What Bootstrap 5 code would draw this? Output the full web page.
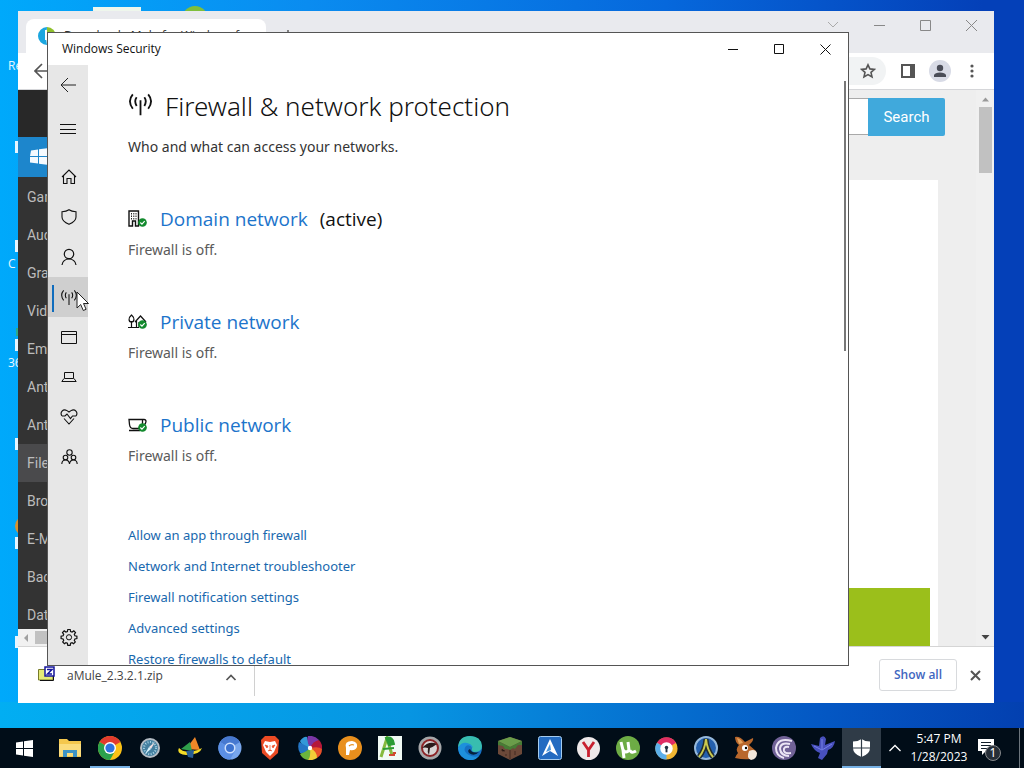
<!DOCTYPE html>
<html lang="en">
<head>
<meta charset="utf-8">
<meta name="viewport" content="width=device-width, initial-scale=1">
<title>Windows Security</title>
<link href="https://cdn.jsdelivr.net/npm/bootstrap@5.3.0/dist/css/bootstrap.min.css" rel="stylesheet">
<style>
  body { font-family: "Noto Sans", "Open Sans", sans-serif; font-size: 14px; line-height: 20px; color: #333; }
  svg { display: block; flex: none; }
  button { border: 0; background: none; padding: 0; }
  a { text-decoration: none; }
  .desktop { background: linear-gradient(90deg, #00a9fb 0, #0a8cf0 30%, #0668dc 65%, #0440b8 96%); }
  .ground { background: linear-gradient(90deg, #02aef2 0, #0795e2 40%, #0458c4 80%, #0340b0 100%); height: 26px; left: 0; right: 0; bottom: 40px; }
  /* desktop icons */
  .shortcut { left: 0; width: 24px; color: #e8f6ff; font: 12px/16px "Open Sans", sans-serif; overflow: hidden; white-space: nowrap; padding-left: 8px; }
  .shortcut i { display: block; width: 4px; height: 12px; margin-left: 7px; background: #e6f5ff; }
  .ic-top { top: 7px; left: 93px; width: 48px; height: 5px; background: #eef6ec; }
  .ic-top2 { top: 6px; left: 182px; width: 26px; height: 26px; border-radius: 50%; background: #7fbf3c; }
  .ic-side { top: 516px; left: 15px; width: 20px; height: 20px; border-radius: 50%; background: #d8922e; }
  .ic-side2 { top: 328px; left: 16px; width: 8px; height: 8px; background: #2fa98a; }
  /* browser */
  .browser { inset: 11px 30px 65px 18px; background: #fff; }
  .tabstrip { height: 42px; background: #e9eaee; padding-top: 8px; }
  .tab { width: 240px; margin-left: 8px; background: #fff; border-radius: 8px 8px 0 0; padding: 0 0 0 12px; font: 12px/34px "Open Sans", sans-serif; }
  .capbtn { width: 46px; height: 28px; margin-top: -8px; }
  .toolbar { height: 37px; border-bottom: 1px solid #d5d6d9; padding-right: 19px; }
  .toolbar .starwrap { width: 60px; height: 28px; border-radius: 0 14px 14px 0; background: #f1f3f4; margin-right: 15px; padding-right: 10px; }
  .avatar { width: 22px; height: 22px; border-radius: 50%; background: #d8dbe6; margin: 0 14px; }
  .catalog { width: 170px; background: #333; font: 14px/38px Roboto, sans-serif; }
  .catalog a { color: #bcbcbc; padding-left: 9px; height: 38px; }
  .catalog .brandrow { height: 47px; background: #282828; }
  .catalog .oswin { height: 40px; margin-bottom: 1px; background: #1d86cc; padding: 11px 0 0 12px; }
  .catalog .current { background: #4a4a4c; }
  .hscroll { height: 17px; background: #f1f1f1; }
  .hscroll b { height: 13px; background: #c1c1c1; margin-left: 3px; }
  .sitebody { background: #eee; }
  .searchrow { height: 90px; padding: 8px 31px 0 0; }
  .searchrow input { width: 300px; height: 37px; border: 1px solid #a9a9a9; border-right: 0; background: #fff; }
  .searchrow button { width: 77px; height: 38px; background: #40a9dc; color: #fff; border-radius: 0 2px 2px 0; font: 15px/38px Roboto, sans-serif; }
  .panel { background: #fff; margin-right: 38px; }
  .promo { height: 58px; background: #9bbf1b; margin-right: 8px; }
  .vscroll { width: 18px; background: #f0f0f0; padding: 6px 2px 4px 3px; }
  .vscroll b { width: 13px; height: 66px; background: #c1c1c1; margin-top: 4px; }
  .downloads { height: 57px; border-top: 1px solid #d5d5d5; }
  .dlitem { width: 237px; border-right: 1px solid #d0d0d0; height: 48px; padding: 14px 17px 0 20px; margin-top: 1px; font-family: "Open Sans", sans-serif; font-size: 12px; line-height: 28px; color: #444; }
  .dlitem svg { margin-top: 4px; }
  .dlend { padding-right: 13px; gap: 13px; }
  .showall { width: 78px; height: 32px; border: 1px solid #d8dadd; border-radius: 3px; color: #3f66c0; font: 600 12px/28px "Open Sans", sans-serif; }
  /* security window */
  .security { inset: 32px 175px 102px 47px; background: #fff; border: 1px solid #555; }
  .titlebar { height: 32px; color: #111; font-family: "Open Sans", sans-serif; font-size: 12px; padding-left: 14px; }
  .titlebar button { width: 46px; height: 32px; }
  .rail { width: 40px; background: #e7e7e7; padding-bottom: 8px; color: #111; }
  .rail button { width: 40px; height: 40px; color: #111; padding-left: 2px; }
  .rail .menu, .rail .backbtn { padding-left: 0; }
  .rail .menu { height: 48px; margin-bottom: 4px; }
  .rail .active { background: #cfcfcf; position: relative; }
  .rail .active::before { content: ""; position: absolute; left: 4px; top: 8px; width: 2px; height: 27px; background: #0f6cbd; }
  .pane { padding: 23px 0 0 40px; }
  .pane h1 { font-size: 26px; line-height: 36px; font-weight: 300; color: #111; margin: 0 0 13px; }
  .pane section { margin-top: 48px; color: #5a5a5a; }
  .pane h2 { font-family: "Open Sans", sans-serif; font-size: 19px; line-height: 28px; font-weight: 400; color: #111; margin: 0 0 7px; }
  .pane a { color: #1a70c0; }
  .pane h2 a { color: #1c74cb; }
  .links { margin-top: 59px; font-size: 13px; line-height: 21px; gap: 10px; }
  .links a { color: #1868ae; }
  .thumb { width: 2px; height: 270px; margin: 16px 2px 0 0; background: #777; }
  .pointer { left: 76px; top: 291px; }
  /* taskbar */
  .taskbar { height: 40px; left: 0; right: 0; bottom: 0; background: #010d18; }
  .taskbar .startbtn { width: 50px; padding-right: 2px; }
  .taskbar .g1 button { width: 40px; height: 40px; }
  .taskbar .g2 button { width: 39px; height: 40px; }
  .taskbar .running { border-bottom: 2px solid #76b0e4; padding-top: 2px; }
  .taskbar .focused { background: #2f3b47; border-bottom: 2px solid #76b0e4; padding-top: 2px; }
  .clock { width: 60px; font-family: "Open Sans", sans-serif; font-size: 12px; line-height: 18px; color: #fff; text-align: center; }
</style>
</head>
<body>
<svg width="0" height="0" class="position-absolute">
  <defs>
    <symbol id="antenna" viewBox="0 0 26 24"><g fill="none" stroke="currentColor"><path d="M13 8v16M9 5q-3 4 0 9M17 5q3 4 0 9M5 2q-6 7 0 15M21 2q6 7 0 15"/></g></symbol>
    <symbol id="tick" viewBox="0 0 10 10"><circle cx="5" cy="5" r="4.8" fill="#138a2e"/><path d="M2.600 5l1.800 1.800 3-3.300" fill="none" stroke="#fff" stroke-width="1.300"/></symbol>
  </defs>
</svg>
<main class="desktop vh-100 position-relative overflow-hidden">
  <div class="ground position-absolute"></div>
  <div class="ic-top position-absolute"></div><div class="ic-top2 position-absolute"></div>
  <div class="ic-side position-absolute"></div><div class="ic-side2 position-absolute"></div>
  <div class="shortcut position-absolute" style="top:58px">Re</div>
  <div class="shortcut position-absolute" style="top:141px"><i></i></div>
  <div class="shortcut position-absolute" style="top:240px"><i></i><span class="d-block mt-1">C</span></div>
  <div class="shortcut position-absolute" style="top:339px"><i></i><span class="d-block mt-1">36</span></div>
  <div class="shortcut position-absolute" style="top:438px"><i></i></div>
  <div class="shortcut position-absolute" style="top:537px"><i></i></div>
  <div class="shortcut position-absolute" style="top:636px"><i></i></div>

  <div class="browser position-absolute d-flex flex-column overflow-hidden">
    <div class="tabstrip d-flex">
      <div class="tab d-flex align-items-center gap-2">
        <svg width="18" height="18" viewBox="0 0 18 18"><path d="M9 0A9 9 0 0 0 9 18L8 11z" fill="#1ba6df"/><path d="M9 0a9 9 0 0 1 9 9L9 11z" fill="#8fc02c"/><path d="M8 3v10" stroke="#fff" stroke-width="2"/></svg>
        <span>Download aMule for Windows free</span>
      </div>
      <svg class="ms-3 mt-2" width="12" height="16"><path d="M6 3v12M0 9h12" stroke="#666" stroke-width="1.600"/></svg>
      <div class="ms-auto d-flex">
        <button class="capbtn d-flex align-items-center justify-content-center" aria-label="Search tabs"><svg width="12" height="8" viewBox="0 0 12 8"><path d="M1 1l5 5 5-5" fill="none" stroke="#aaa"/></svg></button>
        <button class="capbtn d-flex align-items-center justify-content-center" aria-label="Minimize"><svg width="11" height="11"><path d="M0 5.500h11" stroke="#888"/></svg></button>
        <button class="capbtn d-flex align-items-center justify-content-center" aria-label="Maximize"><svg width="11" height="11"><path d="M.5.500h10v10H.5z" fill="none" stroke="#888"/></svg></button>
        <button class="capbtn d-flex align-items-center justify-content-center" aria-label="Close"><svg width="11" height="11"><path d="M0 0l11 11M11 0L0 11" stroke="#888"/></svg></button>
      </div>
    </div>
    <div class="toolbar d-flex align-items-center">
      <svg class="ms-3" width="16" height="16" viewBox="0 0 16 16"><path d="M16 8H1M8 1L1 8l7 7" fill="none" stroke="#555" stroke-width="1.700"/></svg>
      <div class="starwrap ms-auto d-flex align-items-center justify-content-end"><svg width="16" height="16" viewBox="0 0 16 16"><path d="M8 1.800l1.900 4.100 4.500.5-3.400 3 1 4.500-4-2.300-4 2.300 1-4.500-3.400-3 4.500-.5z" fill="none" stroke="#555" stroke-width="1.600"/></svg></div>
      <svg width="14" height="14"><path d="M1 1h12v12H1z" fill="none" stroke="#555" stroke-width="2"/><path d="M9 1h4v12H9z" fill="#555"/></svg>
      <div class="avatar d-flex align-items-center justify-content-center"><svg width="14" height="14"><circle cx="7" cy="4" r="3.200" fill="#4a4d58"/><path d="M1 13v-2q1-2.500 6-2.500T13 11v2z" fill="#4a4d58"/></svg></div>
      <svg width="10" height="14"><g fill="#555"><circle cx="7" cy="2" r="1.600"/><circle cx="7" cy="7" r="1.600"/><circle cx="7" cy="12" r="1.600"/></g></svg>
    </div>
    <div class="d-flex flex-grow-1 overflow-hidden">
      <nav class="catalog d-flex flex-column overflow-hidden">
        <div class="brandrow flex-shrink-0"></div>
        <div class="oswin flex-shrink-0"><svg width="19" height="17" viewBox="0 0 19 17"><path d="M1 2.500L8 1.500V8H0zM9 1.300L19 0v8H9zM0 9h8v6.500l-8-1zM9 9h10v8L9 15.700z" fill="#f4faff"/></svg></div>
        <div class="flex-grow-1 overflow-hidden">
          <a class="d-block" href="#">Games</a><a class="d-block" href="#">Audio</a><a class="d-block" href="#">Graphics</a><a class="d-block" href="#">Video</a><a class="d-block" href="#">Emulation</a><a class="d-block" href="#">Antispyware</a><a class="d-block" href="#">Antivirus</a><a class="d-block current" href="#">File Sharing</a><a class="d-block" href="#">Browsers</a><a class="d-block" href="#">E-Mail</a><a class="d-block" href="#">Backup</a><a class="d-block" href="#">Databases</a>
        </div>
        <div class="hscroll d-flex align-items-center flex-shrink-0 ps-1"><svg width="10" height="10"><path d="M6 1v8L2 5z" fill="#a0a0a0"/></svg><b class="flex-grow-1"></b></div>
      </nav>
      <div class="sitebody d-flex flex-column flex-grow-1">
        <form class="searchrow d-flex justify-content-end align-items-start"><input type="text" aria-label="Search"><button type="button">Search</button></form>
        <div class="panel flex-grow-1 d-flex flex-column justify-content-end"><div class="promo"></div></div>
      </div>
      <div class="vscroll d-flex flex-column"><svg width="13" height="7"><path d="M3 5.500h7l-3.500-4z" fill="#999"/></svg><b></b><svg class="mt-auto" width="13" height="9"><path d="M2.500 2h8l-4 4.500z" fill="#444"/></svg></div>
    </div>
    <div class="downloads d-flex">
      <div class="dlitem d-flex align-items-start">
        <svg width="17" height="16" viewBox="0 0 17 16"><path d="M.5 3.500h13l1.500 2v8.500H.5z" fill="#e4ea78" stroke="#777b29"/><path d="M2 14.500h13.500V9" stroke="#111" fill="none"/><path d="M7 1h9v9H7z" fill="#fff" stroke="#14149c" stroke-width="1.500"/><path d="M9 3.500h5L9.500 8H14" fill="none" stroke="#14149c" stroke-width="1.500"/></svg>
        <span class="me-auto ms-2 ps-1">aMule_2.3.2.1.zip</span>
        <svg width="12" height="20" viewBox="0 0 12 20"><path d="M1.500 14L6 9.500l4.500 4.500" fill="none" stroke="#555" stroke-width="1.700"/></svg>
      </div>
      <div class="dlend ms-auto d-flex align-items-center"><button class="showall">Show all</button><button aria-label="Close downloads"><svg width="11" height="11"><path d="M1 1l9 9M10 1l-9 9" stroke="#555" stroke-width="2"/></svg></button></div>
    </div>
  </div>

  <div class="security position-absolute d-flex flex-column overflow-hidden">
    <div class="titlebar d-flex align-items-center flex-shrink-0"><span class="me-auto">Windows Security</span>
      <button class="d-flex align-items-center justify-content-center" aria-label="Minimize"><svg width="10" height="10"><path d="M0 5.500h10" stroke="#111"/></svg></button>
      <button class="d-flex align-items-center justify-content-center" aria-label="Maximize"><svg width="11" height="11"><path d="M.5.500h9v9h-9z" fill="none" stroke="#111"/></svg></button>
      <button class="d-flex align-items-center justify-content-center" aria-label="Close"><svg width="11" height="11"><path d="M.5.500l10 10M10.500.500l-10 10" stroke="#111"/></svg></button>
    </div>
    <div class="d-flex flex-grow-1 overflow-hidden">
      <nav class="rail d-flex flex-column flex-shrink-0">
        <button class="backbtn d-flex align-items-center justify-content-center" aria-label="Back"><svg width="16" height="14"><path d="M16 7H1M8 0L1 7l7 7" fill="none" stroke="#222"/></svg></button>
        <button class="menu d-flex align-items-center justify-content-center" aria-label="Menu"><svg width="16" height="10"><path d="M0 .5h16M0 5.500h16M0 9.500h16" stroke="#111"/></svg></button>
        <button class="d-flex align-items-center justify-content-center" aria-label="Home"><svg width="16" height="16"><path d="M1 8L8 1l7 7M2.500 6.500v8H6V9.500h4v5h3.500v-8" fill="none" stroke="#111" stroke-width="1.100"/></svg></button>
        <button class="d-flex align-items-center justify-content-center" aria-label="Virus protection"><svg width="16" height="16"><path d="M8 .7q2.500 1.800 7 2V8q0 4.500-7 7.300Q1 12.500 1 8V2.700q4.500-.2 7-2z" fill="none" stroke="#111" stroke-width="1.100"/></svg></button>
        <button class="d-flex align-items-center justify-content-center" aria-label="Account protection"><svg width="16" height="18"><circle cx="8" cy="6" r="4.700" fill="none" stroke="#111" stroke-width="1.200"/><path d="M1 17q1-6 7-6t7 6" fill="none" stroke="#111" stroke-width="1.200"/></svg></button>
        <button class="active d-flex align-items-center justify-content-center" aria-label="Firewall"><svg width="18" height="16" viewBox="0 0 26 24" stroke-width="1.600"><use href="#antenna"/></svg></button>
        <button class="d-flex align-items-center justify-content-center" aria-label="App control"><svg width="16" height="13"><path d="M.5.500h15v12H.5zM0 3.500h16" fill="none" stroke="#111"/></svg></button>
        <button class="d-flex align-items-center justify-content-center" aria-label="Device security"><svg width="16" height="12"><path d="M3.500 1.500h9v6h-9zM3 7.500L.8 10.500h14.400L13 7.500" fill="none" stroke="#111"/></svg></button>
        <button class="d-flex align-items-center justify-content-center" aria-label="Device health"><svg width="18" height="16"><path d="M2 7C-.5 3.500 3-.8 7 1.600L9 3l2-1.400c4-2.400 7.500 1.900 5 5.400M4 9.500L9 15l5-5.500M2 7h3l2-2 3.500 4.500L12.500 7H16" fill="none" stroke="#111" stroke-width="1.100"/></svg></button>
        <button class="d-flex align-items-center justify-content-center" aria-label="Family options"><svg width="17" height="16"><g fill="none" stroke="#111" stroke-width="1.100"><circle cx="8.500" cy="3.500" r="2.700"/><circle cx="4.500" cy="8.500" r="2.300"/><circle cx="12.500" cy="8.500" r="2.300"/><path d="M.8 15q.2-4 3.700-4t4 4q.5-4 4-4t3.700 4"/></g></svg></button>
        <button class="mt-auto d-flex align-items-center justify-content-center" aria-label="Settings"><svg width="18" height="18" viewBox="-9 -9 18 18"><path d="M-1.200-7.500h2.400l.4 2 1.500.6 1.700-1.200 1.700 1.700-1.200 1.700.6 1.500 2 .4v2.400l-2 .4-.6 1.500 1 1.500-1.700 1.700-1.500-1-1.500.6-.4 2h-2.400l-.4-2-1.500-.6-1.500 1-1.700-1.700 1-1.500-.6-1.500-2-.4v-2.400l2-.4.6-1.500-1.200-1.700 1.700-1.700 1.700 1.200 1.500-.6z" fill="none" stroke="#111" stroke-width="1.200"/><circle r="2.600" cy=".3" fill="none" stroke="#111"/></svg></button>
      </nav>
      <div class="pane flex-grow-1">
        <h1 class="d-flex"><svg width="25" height="24" viewBox="0 0 26 24" stroke-width="1.900" class="mt-1 me-2"><use href="#antenna"/></svg><span class="ps-1">Firewall &amp; network protection</span></h1>
        <p class="m-0">Who and what can access your networks.</p>
        <section>
          <h2 class="d-flex align-items-center"><svg width="20" height="18" class="me-2"><path d="M1 16V1h9.500v15H7.500v-5h-3v5z" fill="none" stroke="#111" stroke-width="1.400"/><path d="M3.500 3v7M5.800 3v7M8 3v7" stroke="#222" stroke-dasharray="1.500 1"/><use href="#tick" x="10" y="8" width="9" height="9"/></svg><a class="ms-1" href="#">Domain network</a><span class="ms-2 ps-1">(active)</span></h2>
          <p class="m-0">Firewall is off.</p>
        </section>
        <section>
          <h2 class="d-flex align-items-center"><svg width="20" height="18" class="me-2"><path d="M0 14.500h11M3.500 8v6.500M3.500 2C0 5 .5 9 3.500 9s3.500-4 0-7zM7 9l5.500-6L18 9M8.500 8v6.500M16.500 8v3M11 14V9.500h3V12" fill="none" stroke="#111" stroke-width="1.200"/><use href="#tick" x="10" y="7" width="9" height="9"/></svg><a class="ms-1" href="#">Private network</a></h2>
          <p class="m-0">Firewall is off.</p>
        </section>
        <section>
          <h2 class="d-flex align-items-center"><svg width="20" height="18" class="me-2"><path d="M1 3.500h13.500v7q0 2-2 2H5q-3 0-3.500-4zM14.500 3.500H16q2 0 2 2T16 9M1 14.500h11" fill="none" stroke="#111" stroke-width="1.300"/><use href="#tick" x="10" y="7" width="9" height="9"/></svg><a class="ms-1" href="#">Public network</a></h2>
          <p class="m-0">Firewall is off.</p>
        </section>
        <div class="links d-flex flex-column align-items-start">
          <a href="#">Allow an app through firewall</a>
          <a href="#">Network and Internet troubleshooter</a>
          <a href="#">Firewall notification settings</a>
          <a href="#">Advanced settings</a>
          <a href="#">Restore firewalls to default</a>
        </div>
      </div>
      <div class="thumb flex-shrink-0"></div>
    </div>
  </div>

  <svg class="pointer position-absolute" width="14" height="22"><path d="M1 1v16l3.700-3.500 2.600 6 2.800-1.200-2.600-5.800h5z" fill="#fff" stroke="#222"/></svg>

  <footer class="taskbar position-absolute d-flex align-items-center">
    <button class="startbtn d-flex justify-content-center" aria-label="Start"><svg width="17" height="17" viewBox="0 0 17 17"><path d="M0 2.500l7-1V8H0zM8 1.300L17 0v8H8zM0 9h7v6.500l-7-1zM8 9h9v8l-9-1.300z" fill="#fff"/></svg></button>
    <div class="g1 d-flex">
      <button class="d-flex align-items-center justify-content-center" aria-label="File Explorer"><svg width="22" height="20"><path d="M0 1h8l2 2h12v16H0z" fill="#f4c74d"/><path d="M0 6h22v12H0z" fill="#fbdc7c"/><path d="M4 19v-7h14v7h-4v-4H8v4z" fill="#3e93c4"/></svg></button>
      <button class="running d-flex align-items-center justify-content-center" aria-label="Chrome"><svg width="24" height="24" viewBox="-12 -12 24 24"><circle r="12" fill="#fbc116"/><path d="M0 0L-10.400-6A12 12 0 0 1 10.400-6z" fill="#e33b2e"/><path d="M0 0L-10.400-6A12 12 0 0 0 0 12L5 3z" fill="#2ba24c"/><circle r="6" fill="#fff"/><circle r="4.600" fill="#2f74e0"/></svg></button>
      <button class="d-flex align-items-center justify-content-center" aria-label="Safari"><svg width="20" height="20" viewBox="-10 -10 20 20"><circle r="9" fill="#447f9f" stroke="#b4bcc4" stroke-width="2"/><circle r="6" fill="none" stroke="#a9d3e5" stroke-width="2" stroke-dasharray="1 1.500"/><path d="M5-6L1 1-1-1z" fill="#f2dfe1"/><path d="M-5 6L1 1-1-1z" fill="#d8f1fb"/></svg></button>
      <button class="d-flex align-items-center justify-content-center" aria-label="Download manager"><svg width="24" height="22"><path d="M8 12L17 0l5 13z" fill="#ef8728"/><path d="M3 12l9-7 2 9z" fill="#2fa04b"/><path d="M1 11q-3 6 7 7 14 0 16-7-6 4-12 3-6 2-11-3z" fill="#f5dc27"/><path d="M8 14l8-1-1 8-5-1z" fill="#285e96"/></svg></button>
      <button class="d-flex align-items-center justify-content-center" aria-label="Chromium"><svg width="24" height="24" viewBox="-12 -12 24 24"><circle r="11.500" fill="#78a6ec"/><path d="M0 0L-10-6A11.500 11.500 0 0 1 10-6z" fill="#4779d0"/><path d="M0 0L-10-6A11.500 11.500 0 0 0 0 11.500L5 3z" fill="#5b8fe4"/><circle r="5.500" fill="#cfe0fc"/><circle r="4" fill="#3c72cf"/></svg></button>
      <button class="d-flex align-items-center justify-content-center" aria-label="Brave"><svg width="20" height="24" viewBox="0 0 20 24"><path d="M5 0h10l4 4-1 13-8 7-8-7L1 4z" fill="#ec4b24"/><path d="M5 5l5 1 5-1 2 4-3 7-4 4-4-4-3-7z" fill="#fff"/><path d="M5 9l3 1-1 2zM15 9l-3 1 1 2zM8 15l2-1 2 1M10 9v5" fill="#ec4b24" stroke="#ec4b24" stroke-width=".7"/></svg></button>
      <button class="d-flex align-items-center justify-content-center" aria-label="Photo viewer"><svg width="24" height="24" viewBox="-12 -12 24 24"><path d="M0 0Q-9-2-10-7-6-12-3-11z" fill="#3399d8"/><path d="M0 0Q-4-8-2-12 4-13 9-8z" fill="#7a36a5"/><path d="M0 0Q3-7 9-8q4 4 3 9z" fill="#b5173a"/><path d="M0 0q9-2 12 1 0 6-5 9z" fill="#e8502a"/><path d="M0 0q7 3 7 10-5 3-9 2z" fill="#f3cd38"/><path d="M0 0q1 9-2 12-6-1-8-6z" fill="#6cb43b"/><path d="M0 0q-6 6-10 5-3-5-1-11z" fill="#2476c5"/><circle r="2.200" fill="#fff"/></svg></button>
      <button class="d-flex align-items-center justify-content-center" aria-label="Pale browser"><svg width="24" height="24"><circle cx="12" cy="12" r="12" fill="#e88f1d"/><path d="M8 19V12q-2-7 6-7 6 1 5 6-2 4-7 3l-1 5z" fill="#fff"/><path d="M11 10q2-2 5-1" stroke="#e88f1d" fill="none" stroke-width="1.200"/></svg></button>
      <button class="d-flex align-items-center justify-content-center" aria-label="Ares"><svg width="24" height="24"><path d="M0 0h24v24H0z" fill="#f1faf5"/><path d="M3 21L9 2l5 17" fill="none" stroke="#86ba3e" stroke-width="3"/><path d="M8 2q7-2 8 6l-5 1zM5 13l11-1" fill="#2b9c35" stroke="#2b9c35" stroke-width="2"/><path d="M11 19h6M15 17h3" stroke="#d04a30" stroke-width="2"/></svg></button>
      <button class="d-flex align-items-center justify-content-center" aria-label="Dragon"><svg width="24" height="24" viewBox="-12 -12 24 24"><circle r="11.500" fill="#a6a7a9"/><circle r="8" fill="#d8d4d4" stroke="#8c2326" stroke-width="2"/><path d="M-8 0Q-1-8 7-4 3-1 0 0L-1 7Q-3 4-2 0-5-1-8 0z" fill="#2a1a1a"/></svg></button>
      <button class="d-flex align-items-center justify-content-center" aria-label="Edge"><svg width="24" height="24"><circle cx="12" cy="12" r="12" fill="#1670c4"/><path d="M0 11Q1 0 12 0q11 0 12 10 0 6-8 6-3-1-2-4Q12 4 0 11z" fill="#38bdaf"/><path d="M8 10q-4 5 3 9 5 3 10 1-4 5-10 4Q1 22 0 12q3-6 9-5 5 1 6 5-4-4-7-2z" fill="#1d90dc"/><path d="M12 13q2 5 9 3-5 5-10 1-2-3 1-4z" fill="#06213a"/></svg></button>
      <button class="d-flex align-items-center justify-content-center" aria-label="Minecraft"><svg width="24" height="24"><path d="M0 5l12-4 12 4v13l-12 6-12-6z" fill="#6c4939"/><path d="M0 5l12-4 12 4-12 6z" fill="#6a9d4a"/><path d="M0 5l12 6v3l-3-1-2 0-2-3-5-1zM24 5l-12 6v3l3-2 2 1 3-4 4 0z" fill="#467c35"/><path d="M12 14v9M4 13v2h3M17 15v4M8 18v2" stroke="#432b23"/></svg></button>
    </div>
    <div class="g2 d-flex">
      <button class="d-flex align-items-center justify-content-center" aria-label="Avant"><svg width="24" height="24"><rect x=".5" y=".5" width="23" height="23" rx="2" fill="#236bc1" stroke="#a5ccef"/><path d="M12 3l8 17-8-5-8 5z" fill="#fff"/><path d="M12 8l1 6-5 2z" fill="#4994dc"/></svg></button>
      <button class="d-flex align-items-center justify-content-center" aria-label="Yandex"><svg width="23" height="23"><circle cx="11.500" cy="11.500" r="11.500" fill="#eee9ea"/><path d="M6 5l5.500 8L17 5M11.500 12v8" fill="none" stroke="#c8202f" stroke-width="2.800"/></svg></button>
      <button class="d-flex align-items-center justify-content-center" aria-label="uTorrent"><svg width="24" height="24"><circle cx="12" cy="12" r="12" fill="#6dac45"/><path d="M5 6l2 8q3 4 6 0l-1-8M14 14q1 4 6 1M7 14l1 8" fill="none" stroke="#fff" stroke-width="3"/></svg></button>
      <button class="d-flex align-items-center justify-content-center" aria-label="Secure browser"><svg width="23" height="23" viewBox="-12 -12 24 24"><circle r="11.500" fill="#f2b632"/><path d="M0 0L-10-6A11.500 11.500 0 0 1 10-6z" fill="#e02e64"/><path d="M0 0L-10-6A11.500 11.500 0 0 0 0 11.500z" fill="#5cafe9"/><circle r="6.500" fill="#fff"/><circle cy="-1" r="1.800" fill="#234"/><path d="M-1 0h2v4h-2z" fill="#234"/></svg></button>
      <button class="d-flex align-items-center justify-content-center" aria-label="Anonymous"><svg width="24" height="24"><circle cx="12" cy="12" r="11" fill="#2460ae" stroke="#96b9dc" stroke-width="2"/><path d="M5 21Q11 14 12 3q1 11 7 18" fill="none" stroke="#222d30" stroke-width="5"/><path d="M5 21Q11 14 12 3q1 11 7 18" fill="none" stroke="#cbc94d" stroke-width="2"/></svg></button>
      <button class="d-flex align-items-center justify-content-center" aria-label="aMule"><svg width="24" height="24"><path d="M2 1q5-1 10 5l8-4q1 3-4 7l7 6q2 6-6 8-6 1-15-1 1-3 3-5-3-4 1-8Q2 6 2 1z" fill="#b8672c"/><path d="M4 2q4 1 6 5l-4 1z" fill="#e5a45f"/><path d="M16 15q6-3 8 2 0 6-6 7-5-2-2-9z" fill="#f2e7dc"/><circle cx="12" cy="12" r="3" fill="#fff"/><circle cx="13" cy="12" r="1.200"/></svg></button>
      <button class="d-flex align-items-center justify-content-center" aria-label="BitTorrent"><svg width="24" height="24"><circle cx="12" cy="12" r="12" fill="#716297"/><g fill="none" stroke="#ece5f5" stroke-width="2"><path d="M20 5Q6 1 4 12q0 8 8 10M18 8Q8 6 8 13q1 7 9 7M17 11q-6-1-5 4 1 3 7 2"/></g></svg></button>
      <button class="d-flex align-items-center justify-content-center" aria-label="Hummingbird"><svg width="24" height="24"><path d="M0 8l8 2 1-8q4-4 6 1l-1 6 10-4q-1 7-7 9l-1 4-5 6-4-2 2-5Q3 15 0 8z" fill="#4850bd"/><path d="M3 10l8 4 10-6M11 3v10" fill="none" stroke="#7681e7"/></svg></button>
      <button class="focused d-flex align-items-center justify-content-center" aria-label="Windows Security"><svg width="17" height="18"><path d="M8.500 0Q12 2.500 17 2.500V9q0 6-8.500 9Q0 15 0 9V2.500q5 0 8.500-2.500z" fill="#fff"/><path d="M8.500 0v18M0 9h17" stroke="#2f3b47" stroke-width="1.200"/></svg></button>
    </div>
    <button class="d-flex justify-content-center px-2" aria-label="Hidden icons"><svg width="12" height="8"><path d="M.5 7L6 1.500 11.500 7" fill="none" stroke="#fff" stroke-width="1.300"/></svg></button>
    <div class="clock">5:47 PM<br>1/28/2023</div>
    <button class="ms-auto me-3" aria-label="Notifications"><svg width="26" height="26"><path d="M1 4h16v12H9l-4 4v-4H1z" fill="#fff"/><path d="M4 7.500h10M4 10.500h10M4 13.500h6" stroke="#111d29"/><circle cx="16" cy="18" r="7.500" fill="#262e38" stroke="#87898c"/><text x="16" y="22" fill="#fff" font-size="12" text-anchor="middle">1</text></svg></button>
    <div class="border-start border-secondary h-100 pe-1"></div>
  </footer>
</main>
<script src="https://cdn.jsdelivr.net/npm/bootstrap@5.3.0/dist/js/bootstrap.bundle.min.js"></script>
</body>
</html>
